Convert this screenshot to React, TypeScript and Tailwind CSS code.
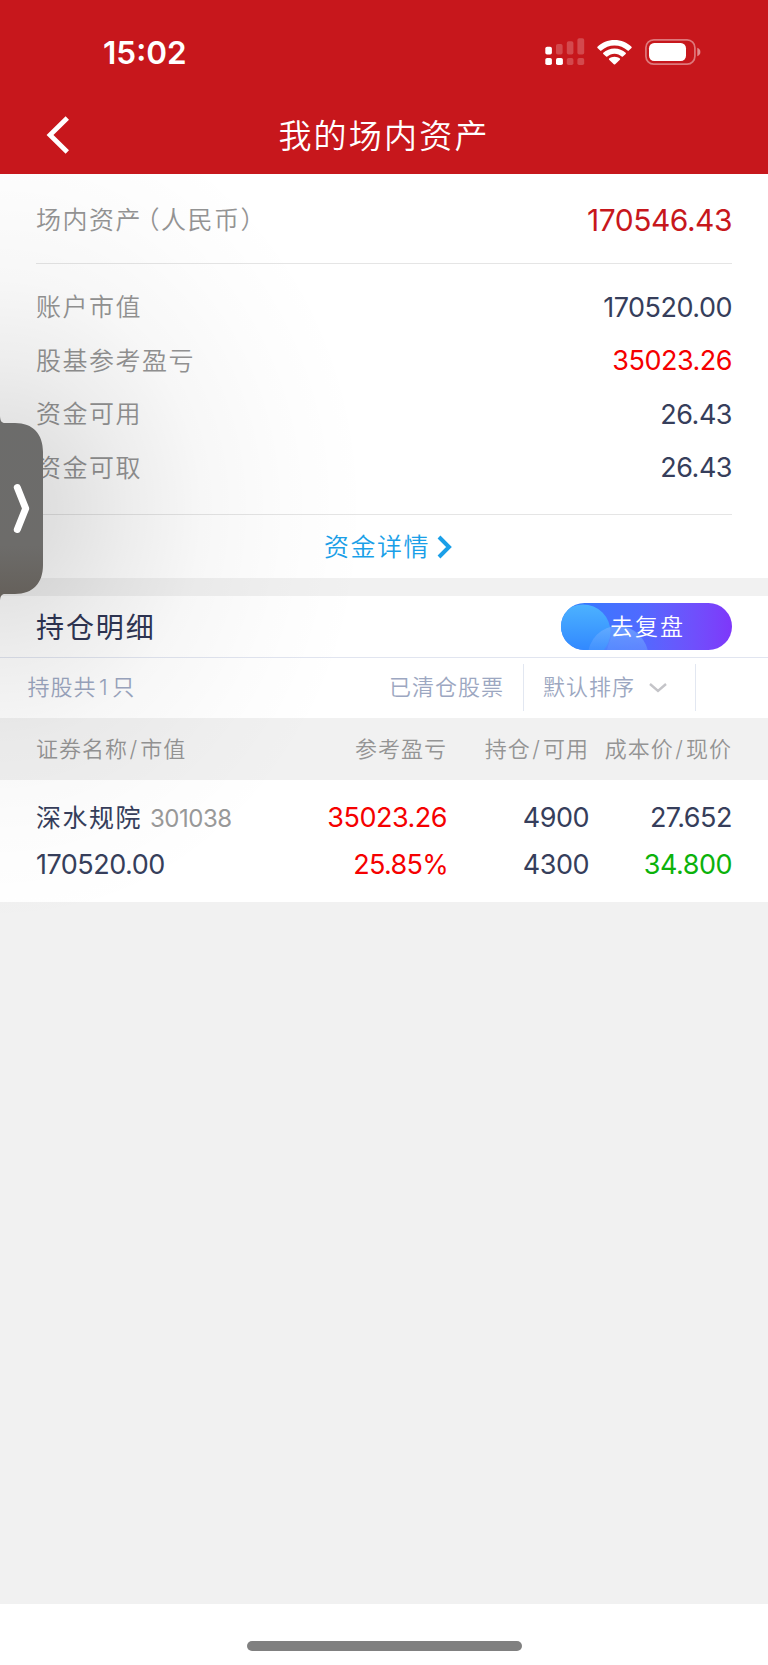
import clsx from "clsx";

type Tone = "ink" | "red" | "green";

const TONES: Record<Tone, string> = {
	ink: "text-[#363e5b]",
	red: "text-[#f50000]",
	green: "text-[#0bb20b]",
};

const SUMMARY: { label: string; value: string; tone: Tone }[] = [
	{ label: "账户市值", value: "170520.00", tone: "ink" },
	{ label: "股基参考盈亏", value: "35023.26", tone: "red" },
	{ label: "资金可用", value: "26.43", tone: "ink" },
	{ label: "资金可取", value: "26.43", tone: "ink" },
];

const HOLDINGS = [
	{
		name: "深水规院",
		code: "301038",
		marketValue: "170520.00",
		profit: "35023.26",
		profitRate: "25.85%",
		held: "4900",
		available: "4300",
		cost: "27.652",
		price: "34.800",
	},
];

const COLUMNS = "grid grid-cols-[1fr_160px_142px_143px]";

function SignalIcon() {
	return (
		<svg width="40" height="28" viewBox="0 0 40 28" fill="white">
			<rect x="0.3" y="8.7" width="6.6" height="7.8" rx="1.8" />
			<rect x="11" y="6" width="6.6" height="10.5" rx="1.8" opacity="0.22" />
			<rect x="21.8" y="3.2" width="6.6" height="13.3" rx="1.8" opacity="0.22" />
			<rect x="32.4" y="0.2" width="6.8" height="16.3" rx="1.8" opacity="0.22" />
			<rect x="0.3" y="20" width="6.6" height="7" rx="1.8" />
			<rect x="11" y="20" width="6.9" height="7" rx="1.8" />
			<rect x="21.8" y="20" width="6.6" height="7" rx="1.8" opacity="0.22" />
			<rect x="32.4" y="20" width="6.8" height="7" rx="1.8" opacity="0.22" />
		</svg>
	);
}

function WifiIcon() {
	return (
		<svg width="35" height="25" viewBox="0 0 35 25" fill="white">
			<path d="M17.5 0C24.2 0 30.2 2.6 34.5 6.8C34.9 7.2 34.9 7.6 34.5 8L31.8 10.6C31.4 11 31 11 30.6 10.6C27.1 7.4 22.5 5.5 17.5 5.5C12.5 5.5 7.9 7.4 4.4 10.6C4 11 3.6 11 3.2 10.6L0.5 8C0.1 7.6 0.1 7.2 0.5 6.8C4.8 2.6 10.8 0 17.5 0Z" />
			<path d="M17.5 8.4C21.9 8.4 25.8 10 28.7 12.7C29.1 13.1 29.1 13.5 28.7 13.9L25.9 16.5C25.5 16.9 25.1 16.9 24.7 16.5C22.8 14.8 20.3 13.7 17.5 13.7C14.7 13.7 12.2 14.8 10.3 16.5C9.9 16.9 9.5 16.9 9.1 16.5L6.3 13.9C5.9 13.5 5.9 13.1 6.3 12.7C9.2 10 13.1 8.4 17.5 8.4Z" />
			<path d="M17.5 16.7C19.6 16.7 21.5 17.4 22.9 18.6C23.3 19 23.3 19.4 22.9 19.8L18.2 24.3C17.7 24.7 17.3 24.7 16.8 24.3L12.1 19.8C11.7 19.4 11.7 19 12.1 18.6C13.5 17.4 15.4 16.7 17.5 16.7Z" />
		</svg>
	);
}

function BatteryIcon() {
	return (
		<svg width="56" height="27" viewBox="0 0 56 27" fill="none">
			<rect x="0.9" y="0.9" width="49" height="24.2" rx="7.8" stroke="white" strokeOpacity="0.42" strokeWidth="1.7" />
			<rect x="4" y="4" width="37" height="18" rx="5.2" fill="white" />
			<path d="M52.3 8.8C54.3 9.6 55.4 11 55.4 13C55.4 15 54.3 16.4 52.3 17.2Z" fill="white" fillOpacity="0.5" />
		</svg>
	);
}

function Header() {
	return (
		<header className="h-[174px] bg-[#c7171c] text-white">
			<div className="flex h-[94px] items-center justify-between pt-[11px] pr-[67px] pl-[103px]">
				<span className="text-[31.5px] leading-none font-semibold">15:02</span>
				<div className="flex items-center pb-[1px]">
					<SignalIcon />
					<div className="ml-[12px]">
						<WifiIcon />
					</div>
					<div className="ml-[13px]">
						<BatteryIcon />
					</div>
				</div>
			</div>
			<div className="grid h-[80px] grid-cols-[1fr_auto_1fr] items-center pt-[2px]">
				<svg className="ml-[46px]" width="24" height="38" viewBox="0 0 24 38" fill="none">
					<path d="M21.3 2L4 19L21.3 36" stroke="white" strokeWidth="4.8" />
				</svg>
				<h1 className="pt-[3px] text-[33px] leading-none font-[350] tracking-[2.2px]">我的场内资产</h1>
				<span />
			</div>
		</header>
	);
}

function AssetSummary() {
	return (
		<section className="h-[404px] bg-white px-9">
			<div className="flex h-[90px] items-center justify-between border-b border-[#e5e5e5] pt-[3px]">
				<span className="pt-[1px] text-[25px] font-[350] tracking-[1.5px] text-[#949494]">
					场内资产
					<span className="ml-[5px] [font-feature-settings:'halt']">（</span>
					人民币
					<span className="[font-feature-settings:'halt']">）</span>
				</span>
				<span className="text-[30px] tracking-[-0.5px] text-[#c7171c]">170546.43</span>
			</div>
			<div className="flex h-[251px] flex-col border-b border-[#e5e5e5] pt-[17px]">
				{SUMMARY.map((row) => (
					<div key={row.label} className="flex h-[53.6px] items-center justify-between">
						<span className="text-[25px] font-[350] tracking-[1.5px] text-[#949494]">{row.label}</span>
						<span className={clsx("text-[27px] tracking-[-0.5px]", TONES[row.tone])}>{row.value}</span>
					</div>
				))}
			</div>
			<div className="flex h-[63px] items-center justify-center gap-[7px] pt-[1px] pl-[9px] text-[#1a9fe8]">
				<span className="pt-[2px] text-[25px] font-[350] tracking-[1.5px]">资金详情</span>
				<svg width="16" height="24" viewBox="0 0 16 24" fill="none">
					<path d="M2 2L12 12L2 22" stroke="currentColor" strokeWidth="4" />
				</svg>
			</div>
		</section>
	);
}

function ReviewButton() {
	return (
		<button className="relative flex h-[47px] w-[171px] items-center justify-center overflow-hidden rounded-full bg-linear-to-r from-[#287dff] via-[#4e6bff] via-45% to-[#7e37fa] text-[23px] tracking-[1.8px] text-white">
			<svg className="absolute inset-0" width="171" height="47" viewBox="0 0 171 47">
				<defs>
					<linearGradient id="bubbleLarge" x1="0" y1="0" x2="0" y2="1">
						<stop offset="0" stopColor="#4cb2ff" />
						<stop offset="1" stopColor="#2c80ff" />
					</linearGradient>
					<linearGradient id="bubbleSmall" x1="0" y1="0" x2="0" y2="1">
						<stop offset="0" stopColor="#7ab4ff" stopOpacity="0.6" />
						<stop offset="0.5" stopColor="#60a0ff" stopOpacity="0.25" />
					</linearGradient>
				</defs>
				<circle cx="22" cy="29" r="27.5" fill="url(#bubbleLarge)" />
				<circle cx="57" cy="53" r="30" fill="url(#bubbleSmall)" />
				<path d="M46 47C48 38 51 31 58 23C72 25 83 34 87 47Z" fill="#8fb5ff" fillOpacity="0.15" />
			</svg>
			<span className="relative pt-[1px] pl-[2px] font-[350]">去复盘</span>
		</button>
	);
}

function HoldingsToolbar() {
	return (
		<div className="flex h-[60px] items-center bg-white pb-[1px] text-[22px] font-[350] tracking-[1px] text-[#9ca7c1]">
			<span className="pl-[27.5px]">
				持股共<span className="mr-[3.5px] ml-[2.5px]">1</span>只
			</span>
			<span className="ml-auto pr-[19px]">已清仓股票</span>
			<div className="flex h-[47px] w-[173px] items-center border-x-[1.5px] border-[#e2e7f1] pl-[19px]">
				<span>默认排序</span>
				<svg className="ml-[13px]" width="20" height="12" viewBox="0 0 20 12" fill="none">
					<path d="M2 2L10 9L18 2" stroke="#c4c4c8" strokeWidth="2.4" />
				</svg>
			</div>
			<span className="w-[72px]" />
		</div>
	);
}

function Slash() {
	return <span className="mr-[2px] ml-[1.5px]">/</span>;
}

function Holdings() {
	return (
		<section>
			<div className="flex h-[62px] items-center justify-between border-b border-[#e1e5f0] bg-white px-9">
				<h2 className="pt-[2px] text-[28px] tracking-[1.9px] text-[#2f3655]">持仓明细</h2>
				<ReviewButton />
			</div>
			<HoldingsToolbar />
			<div className={clsx(COLUMNS, "h-[62px] items-center bg-[#f1f1f1] px-9 text-right text-[22px] font-[350] tracking-[1px] whitespace-nowrap text-[#949494]")}>
				<span className="text-left">
					证券名称
					<Slash />
					市值
				</span>
				<span>参考盈亏</span>
				<span>
					持仓
					<Slash />
					可用
				</span>
				<span>
					成本价
					<Slash />
					现价
				</span>
			</div>
			{HOLDINGS.map((item) => (
				<div key={item.code} className="h-[122px] bg-white px-9 pt-[15px]">
					<div className={clsx(COLUMNS, "h-[47px] items-center text-right text-[27px] tracking-[-0.5px] text-[#363e5b]")}>
						<span className="flex items-center gap-[8px]">
							<span className="pt-[1px] text-[25px] tracking-[1.5px]">{item.name}</span>
							<span className="text-[24px] text-[#999]">{item.code}</span>
						</span>
						<span className={TONES.red}>{item.profit}</span>
						<span>{item.held}</span>
						<span>{item.cost}</span>
					</div>
					<div className={clsx(COLUMNS, "h-[47px] items-center text-right text-[27px] tracking-[-0.5px] text-[#363e5b]")}>
						<span className="text-left">{item.marketValue}</span>
						<span className="-mr-[1px] tracking-[-0.7px] text-[#f50000]">{item.profitRate}</span>
						<span>{item.available}</span>
						<span className={TONES.green}>{item.price}</span>
					</div>
				</div>
			))}
		</section>
	);
}

// Floating drawer handle with the soft shadow it casts over the page
function DrawerHandle() {
	return (
		<>
			<div className="pointer-events-none absolute top-[174px] left-0 h-[780px] w-[400px] bg-[radial-gradient(ellipse_370px_420px_at_0px_335px,rgba(0,0,0,0.145)_0%,rgba(0,0,0,0.120)_15%,rgba(0,0,0,0.070)_35%,rgba(0,0,0,0.032)_55%,rgba(0,0,0,0.010)_78%,transparent_100%)]" />
			<svg className="absolute top-[416px] left-0" width="44" height="186" viewBox="0 0 44 186" fill="none">
				<defs>
					<linearGradient id="handle" x1="0" y1="0" x2="0" y2="1">
						<stop offset="0" stopColor="#6c6c6b" />
						<stop offset="0.7" stopColor="#6d6c6a" />
						<stop offset="1" stopColor="#645f59" />
					</linearGradient>
				</defs>
				<path d="M0 0C0.3 5 1.5 7 5 7H15C33 7 43 18 43 36V149C43 167 33 178 15 178H5C1.5 178 0.3 180 0 185Z" fill="url(#handle)" />
				<path d="M17.3 71.5L25.7 92.5L17.3 113.5" stroke="white" strokeWidth="7" strokeLinecap="round" strokeLinejoin="round" />
			</svg>
		</>
	);
}

export default function App() {
	return (
		<div className="relative flex h-[1665px] w-[768px] flex-col overflow-hidden bg-[#f1f1f1] font-['Inter','Noto_Sans_CJK_SC',sans-serif]">
			<Header />
			<AssetSummary />
			<div className="h-[18px]" />
			<Holdings />
			<footer className="mt-auto flex h-[61px] justify-center bg-white pt-[37px]">
				<div className="h-[10px] w-[275px] rounded-full bg-[#808080]" />
			</footer>
			<DrawerHandle />
		</div>
	);
}
